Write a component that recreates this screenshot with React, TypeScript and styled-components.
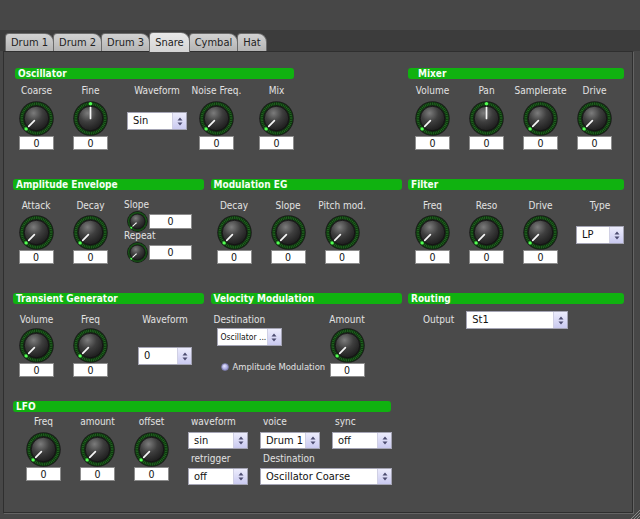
import React, { useId } from 'react';
import styled, { createGlobalStyle } from 'styled-components';

const GlobalStyle = createGlobalStyle`
  html, body {
    margin: 0;
    padding: 0;
    background: #474747;
  }
  body {
    font-family: "DejaVu Sans Condensed", "DejaVu Sans", Verdana, sans-serif;
    font-stretch: condensed;
  }
`;

const Window = styled.div`
  position: relative;
  width: 640px;
  height: 519px;
  overflow: hidden;
  background: #474747;
  display: flex;
  flex-direction: column;
`;

const TopSpace = styled.div`
  height: 30px;
  flex: none;
`;

const TabBar = styled.div`
  height: 21px;
  flex: none;
  background: #3c3c3c;
  display: flex;
  align-items: flex-end;
  padding-left: 5px;
  position: relative;
  z-index: 2;
`;

const Tab = styled.div<{ $active?: boolean }>`
  height: ${(p) => (p.$active ? 20 : 18)}px;
  margin-bottom: ${(p) => (p.$active ? -1 : 0)}px;
  margin-right: -1px;
  padding: 0 5px;
  box-sizing: border-box;
  border: 1px solid #6a6a6a;
  border-bottom: none;
  border-radius: 4px 9px 0 0;
  background: ${(p) =>
    p.$active ? 'linear-gradient(#e8e8e8, #d4d4d4)' : 'linear-gradient(#d2d2d2, #b4b4b4)'};
  font-size: 11px;
  line-height: ${(p) => (p.$active ? 19 : 17)}px;
  color: #222;
  white-space: nowrap;
  position: relative;
  z-index: ${(p) => (p.$active ? 2 : 1)};
`;

const Panel = styled.div`
  height: 462px;
  margin: 0 7px 0 3px;
  box-sizing: border-box;
  background: #4a4a4a;
  border: 1px solid #2f2f2f;
  box-shadow: 1px 1px 0 #646464;
  padding: 16px 0 0 9px;
  display: grid;
  grid-template-columns: 191px 191px 216px;
  grid-template-rows: 111px 114px 108px auto;
  column-gap: 6.5px;
`;

const Section = styled.section<{ $col?: string; $w?: number; $ml?: number }>`
  grid-column: ${(p) => p.$col ?? 'auto'};
  width: ${(p) => (p.$w ? `${p.$w}px` : 'auto')};
  margin-left: ${(p) => p.$ml ?? 0}px;
  display: flex;
  flex-direction: column;
`;

const Header = styled.div<{ $pad?: number }>`
  height: 11px;
  line-height: 11px;
  background: #10b210;
  border-radius: 3px;
  padding-left: ${(p) => p.$pad ?? 3}px;
  color: #f4fff4;
  font-size: 10px;
  font-weight: bold;
  white-space: nowrap;
`;

const Body = styled.div<{ $top: number }>`
  padding-top: ${(p) => p.$top}px;
  display: flex;
  align-items: flex-start;
`;

const Controls = styled.div<{ $pad?: number; $gap?: number }>`
  display: flex;
  align-items: flex-start;
  padding-left: ${(p) => p.$pad ?? 0}px;
  gap: ${(p) => p.$gap ?? 0}px;
`;

const Control = styled.div<{ $w?: number }>`
  width: ${(p) => p.$w ?? 42}px;
  flex: none;
  display: flex;
  flex-direction: column;
  align-items: center;
`;

const Label = styled.div`
  font-size: 10px;
  line-height: 14px;
  color: #e2e2e2;
  white-space: nowrap;
`;

const SideLabel = styled(Label)<{ $mt?: number }>`
  line-height: 12px;
  margin-top: ${(p) => p.$mt ?? 0}px;
`;

const KnobSlot = styled.div<{ $mt?: number }>`
  margin-top: ${(p) => p.$mt ?? 2.5}px;
  height: 35px;
`;

const ValueBox = styled.div<{ $w?: number; $h?: number }>`
  width: ${(p) => p.$w ?? 35}px;
  height: ${(p) => p.$h ?? 14}px;
  box-sizing: border-box;
  background: #fff;
  border: 1px solid #8c8c8c;
  font-size: 10.5px;
  line-height: ${(p) => (p.$h ?? 14) - 2}px;
  text-align: center;
  color: #111;
`;

const SelectBox = styled.div<{ $w: number; $h?: number; $mt?: number; $ml?: number }>`
  width: ${(p) => p.$w}px;
  height: ${(p) => p.$h ?? 17}px;
  margin-top: ${(p) => p.$mt ?? 0}px;
  margin-left: ${(p) => p.$ml ?? 0}px;
  box-sizing: border-box;
  display: flex;
  background: #fff;
  border: 1px solid #a4a4b4;
  flex: none;
`;

const SelectText = styled.span<{ $small?: boolean; $h: number }>`
  flex: 1;
  min-width: 0;
  padding-left: ${(p) => (p.$small ? 3 : 5)}px;
  font-size: ${(p) => (p.$small ? 8.5 : 11)}px;
  line-height: ${(p) => p.$h - 2}px;
  color: #111;
  white-space: nowrap;
  overflow: hidden;
`;

const Spinner = styled.span`
  width: 13px;
  flex: none;
  display: flex;
  align-items: center;
  justify-content: center;
  background: linear-gradient(#ececfc, #cacaf0);
  border-left: 1px solid #d0d0e4;
`;

const Column = styled.div<{ $pad?: number; $w?: number; $ml?: number }>`
  display: flex;
  flex-direction: column;
  align-items: flex-start;
  box-sizing: border-box;
  padding-left: ${(p) => p.$pad ?? 0}px;
  margin-left: ${(p) => p.$ml ?? 0}px;
  width: ${(p) => (p.$w ? `${p.$w}px` : 'auto')};
  flex: none;
`;

const MiniRow = styled.div<{ $ml?: number }>`
  display: flex;
  align-items: center;
  margin-left: ${(p) => p.$ml ?? 0}px;
  gap: 1px;
`;

const RadioRow = styled.div`
  display: flex;
  align-items: center;
  gap: 4px;
  margin: 14px 0 0 7px;
  font-size: 9.4px;
  line-height: 14px;
  color: #e2e2e2;
  white-space: nowrap;
`;

const RadioDot = styled.span`
  width: 8px;
  height: 8px;
  border-radius: 50%;
  background: radial-gradient(circle at 40% 35%, #e4e4ff, #9c9cd8 70%);
  border: 1px solid #7a7aa8;
  box-sizing: border-box;
`;

const InlineRow = styled.div<{ $pad?: number }>`
  display: flex;
  align-items: center;
  padding-left: ${(p) => p.$pad ?? 0}px;
  gap: 12px;
`;

const SelectGrid = styled.div`
  display: grid;
  grid-template-columns: 60px 60px 60px;
  column-gap: 12px;
  margin-left: 15.5px;
`;

const GridLabel = styled(Label)<{ $mt?: number; $span?: boolean }>`
  padding-left: 3px;
  margin-top: ${(p) => p.$mt ?? 0}px;
  grid-column: ${(p) => (p.$span ? '2 / 4' : 'auto')};
`;

const GridWide = styled.div`
  grid-column: 2 / 4;
`;

const Grip = styled.svg`
  position: absolute;
  right: 0;
  bottom: 0;
`;

const Knob: React.FC<{ size?: number; up?: boolean }> = ({ size = 35, up }) => {
  const id = useId().replace(/[^a-zA-Z0-9]/g, '');
  const a = ((up ? 0 : 225) * Math.PI) / 180;
  const dx = Math.sin(a);
  const dy = -Math.cos(a);
  const c = 17.5;
  return (
    <svg width={size} height={size} viewBox="0 0 35 35" style={{ display: 'block' }}>
      <defs>
        <radialGradient id={`kb${id}`} cx="38%" cy="28%" r="80%">
          <stop offset="0" stopColor="#7c7c7c" />
          <stop offset="0.45" stopColor="#3e3e3e" />
          <stop offset="1" stopColor="#181818" />
        </radialGradient>
      </defs>
      <circle cx={c} cy={c} r={17.3} fill="#1c1c1c" />
      <circle cx={c} cy={c} r={14.7} fill="none" stroke="#0f330f" strokeWidth={3.6} />
      <circle
        cx={c}
        cy={c}
        r={14.7}
        fill="none"
        stroke="#267426"
        strokeWidth={2.4}
        strokeDasharray="0.7 1.1"
      />
      <circle cx={c} cy={c} r={12.2} fill={`url(#kb${id})`} stroke="#101010" strokeWidth={0.7} />
      <line
        x1={c + dx * (up ? 0 : 3)}
        y1={c + dy * (up ? 0 : 3)}
        x2={c + dx * 11}
        y2={c + dy * 11}
        stroke="#f6f6f6"
        strokeWidth={1.7}
        strokeLinecap="round"
      />
      <circle cx={c + dx * 14.7} cy={c + dy * 14.7} r={1.7} fill="#52ff52" />
    </svg>
  );
};

const Arrows = () => (
  <svg width="6" height="9" viewBox="0 0 6 9">
    <path d="M3 0.5 L5.5 3.5 L0.5 3.5 Z M3 8.5 L5.5 5.5 L0.5 5.5 Z" fill="#4c4c70" />
  </svg>
);

const Select: React.FC<{
  value: string;
  w: number;
  h?: number;
  mt?: number;
  ml?: number;
  small?: boolean;
}> = ({ value, w, h = 17, mt, ml, small }) => (
  <SelectBox $w={w} $h={h} $mt={mt} $ml={ml}>
    <SelectText $small={small} $h={h}>
      {value}
    </SelectText>
    <Spinner>
      <Arrows />
    </Spinner>
  </SelectBox>
);

const KnobControl: React.FC<{ label: string; w?: number; up?: boolean; mt?: number }> = ({
  label,
  w,
  up,
  mt,
}) => (
  <Control $w={w}>
    <Label>{label}</Label>
    <KnobSlot $mt={mt}>
      <Knob up={up} />
    </KnobSlot>
    <ValueBox>0</ValueBox>
  </Control>
);

const tabs = ['Drum 1', 'Drum 2', 'Drum 3', 'Snare', 'Cymbal', 'Hat'];

export default function App() {
  return (
    <Window>
      <GlobalStyle />
      <TopSpace />
      <TabBar>
        {tabs.map((t) => (
          <Tab key={t} $active={t === 'Snare'}>
            {t}
          </Tab>
        ))}
      </TabBar>
      <Panel>
        <Section $col="1 / 3" $w={279} $ml={2}>
          <Header>Oscillator</Header>
          <Body $top={5}>
            <Controls>
              <KnobControl label="Coarse" w={43} />
              <KnobControl label="Fine" w={65} up />
              <Control $w={68}>
                <Label>Waveform</Label>
                <Select value="Sin" w={60} h={18} mt={14} />
              </Control>
              <KnobControl label="Noise Freq." w={51} />
              <KnobControl label="Mix" w={69} />
            </Controls>
          </Body>
        </Section>
        <Section $col="3">
          <Header $pad={10}>Mixer</Header>
          <Body $top={5}>
            <Controls $pad={3.5} $gap={12}>
              <KnobControl label="Volume" />
              <KnobControl label="Pan" up />
              <KnobControl label="Samplerate" />
              <KnobControl label="Drive" />
            </Controls>
          </Body>
        </Section>

        <Section>
          <Header>Amplitude Envelope</Header>
          <Body $top={8.5}>
            <Controls>
              <KnobControl label="Attack" w={46} />
              <KnobControl label="Decay" w={63} />
            </Controls>
            <Column $ml={2}>
              <SideLabel>Slope</SideLabel>
              <MiniRow $ml={3}>
                <Knob size={21} />
                <ValueBox $w={43} $h={15}>
                  0
                </ValueBox>
              </MiniRow>
              <SideLabel $mt={-2}>Repeat</SideLabel>
              <MiniRow $ml={3}>
                <Knob size={21} />
                <ValueBox $w={43} $h={15}>
                  0
                </ValueBox>
              </MiniRow>
            </Column>
          </Body>
        </Section>
        <Section>
          <Header>Modulation EG</Header>
          <Body $top={8.5}>
            <Controls $pad={2.5} $gap={12}>
              <KnobControl label="Decay" mt={2} />
              <KnobControl label="Slope" mt={2} />
              <KnobControl label="Pitch mod." mt={2} />
            </Controls>
          </Body>
        </Section>
        <Section>
          <Header>Filter</Header>
          <Body $top={8.5}>
            <Controls $pad={3.5} $gap={12}>
              <KnobControl label="Freq" mt={2} />
              <KnobControl label="Reso" mt={2} />
              <KnobControl label="Drive" mt={2} />
              <Control $w={53}>
                <Label>Type</Label>
                <Select value="LP" w={48} h={18} mt={13.5} />
              </Control>
            </Controls>
          </Body>
        </Section>

        <Section>
          <Header>Transient Generator</Header>
          <Body $top={8.5}>
            <Controls $pad={2.5} $gap={12}>
              <KnobControl label="Volume" mt={1.5} />
              <KnobControl label="Freq" mt={1.5} />
              <Control $w={83}>
                <Label>Waveform</Label>
                <Select value="0" w={54} h={18} mt={20.5} />
              </Control>
            </Controls>
          </Body>
        </Section>
        <Section>
          <Header>Velocity Modulation</Header>
          <Body $top={8.5}>
            <Column $w={113} $pad={3}>
              <Label>Destination</Label>
              <Select value="Oscillator ..." w={65} h={18} mt={1.5} ml={3} small />
              <RadioRow>
                <RadioDot />
                Amplitude Modulation
              </RadioRow>
            </Column>
            <Controls $pad={2.5}>
              <KnobControl label="Amount" mt={1.5} />
            </Controls>
          </Body>
        </Section>
        <Section>
          <Header>Routing</Header>
          <Body $top={7}>
            <InlineRow $pad={15}>
              <Label>Output</Label>
              <Select value="St1" w={102} h={18} />
            </InlineRow>
          </Body>
        </Section>

        <Section $col="1 / 3" $w={378}>
          <Header>LFO</Header>
          <Body $top={2.5}>
            <Controls $pad={9.5} $gap={12}>
              <KnobControl label="Freq" mt={3.5} />
              <KnobControl label="amount" mt={3.5} />
              <KnobControl label="offset" mt={3.5} />
            </Controls>
            <SelectGrid>
              <GridLabel>waveform</GridLabel>
              <GridLabel>voice</GridLabel>
              <GridLabel>sync</GridLabel>
              <Select value="sin" w={60} h={17} mt={3.5} />
              <Select value="Drum 1" w={60} h={17} mt={3.5} />
              <Select value="off" w={60} h={17} mt={3.5} />
              <GridLabel $mt={3}>retrigger</GridLabel>
              <GridLabel $mt={3} $span>
                Destination
              </GridLabel>
              <Select value="off" w={60} h={17} mt={2} />
              <GridWide>
                <Select value="Oscillator Coarse" w={132} h={17} mt={2} />
              </GridWide>
            </SelectGrid>
          </Body>
        </Section>
      </Panel>
      <Grip width="10" height="10" viewBox="0 0 10 10">
        <path d="M10 1 L1 10 M10 4 L4 10 M10 7 L7 10" stroke="#9a9a9a" strokeWidth="0.8" />
      </Grip>
    </Window>
  );
}
